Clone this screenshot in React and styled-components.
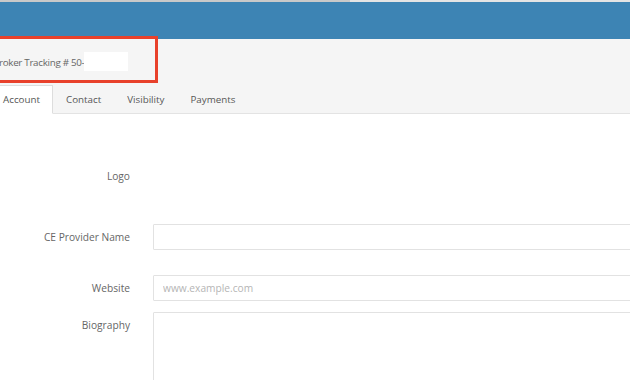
import React from "react";
import styled, { createGlobalStyle } from "styled-components";

const GlobalStyle = createGlobalStyle`
  body {
    margin: 0;
    background: #ffffff;
    font-family: "Open Sans", "Liberation Sans", sans-serif;
    overflow: hidden;
  }
`;

const tabs = ["Account", "Contact", "Visibility", "Payments"];

const App = () => {
  return (
    <>
      <GlobalStyle />
      <Page>
        <TopStrip>
          <StripPart />
          <StripPart light />
        </TopStrip>
        <Header />
        <SubBar>
          <TrackingBox>
            <TrackingText>Broker Tracking # 50-</TrackingText>
            <Redacted />
          </TrackingBox>
          <TabList>
            {tabs.map((t, i) => (
              <Tab key={t} active={i === 0}>
                {t}
              </Tab>
            ))}
          </TabList>
        </SubBar>
        <Form>
          <Row gap={35}>
            <Label>Logo</Label>
            <Spacer />
          </Row>
          <Row gap={25}>
            <Label>CE Provider Name</Label>
            <Input type="text" />
          </Row>
          <Row gap={11}>
            <Label>Website</Label>
            <Input type="text" placeholder="www.example.com" />
          </Row>
          <Row top>
            <Label top>Biography</Label>
            <TextArea />
          </Row>
        </Form>
      </Page>
    </>
  );
};

const Page = styled.div`
  width: 630px;
  height: 380px;
  overflow: hidden;
`;

const TopStrip = styled.div`
  display: flex;
  height: 2px;
`;

const StripPart = styled.div`
  flex: ${(p) => (p.light ? "1" : "0 0 350px")};
  background: ${(p) => (p.light ? "#e4e4e4" : "#c9c9c9")};
`;

const Header = styled.div`
  height: 37px;
  background: #3d84b4;
`;

const SubBar = styled.div`
  background: #f5f5f5;
  border-bottom: 1px solid #e3e3e3;
  height: 74px;
  display: flex;
  flex-direction: column;
`;

const TrackingBox = styled.div`
  display: flex;
  align-items: center;
  width: 160px;
  height: 41px;
  margin-left: -8px;
  margin-top: -3px;
  border: 3px solid #e8412b;
  box-sizing: content-box;
`;

const TrackingText = styled.span`
  font-size: 9.8px;
  letter-spacing: -0.3px;
  color: #666666;
  margin-left: -2px;
  padding-top: 5px;
`;

const Redacted = styled.span`
  display: inline-block;
  width: 44px;
  height: 19px;
  margin-top: 3px;
  background: #ffffff;
`;

const TabList = styled.div`
  display: flex;
  margin-top: 2px;
  margin-left: -10px;
  flex: 1;
  align-items: flex-end;
`;

const Tab = styled.div`
  height: 27px;
  display: flex;
  align-items: center;
  padding: 0 12px;
  font-size: 9.8px;
  color: #555555;
  margin-bottom: -1px;
  background: ${(p) => (p.active ? "#ffffff" : "transparent")};
  border: 1px solid ${(p) => (p.active ? "#dddddd" : "transparent")};
  border-bottom: 1px solid ${(p) => (p.active ? "#ffffff" : "transparent")};
`;

const Form = styled.div`
  padding-top: 49px;
  width: 760px;
`;

const Row = styled.div`
  display: flex;
  align-items: ${(p) => (p.top ? "flex-start" : "center")};
  gap: 23px;
  margin-bottom: ${(p) => (p.gap ? `${p.gap}px` : "0")};
`;

const Label = styled.label`
  flex: 0 0 130px;
  text-align: right;
  font-size: 10.2px;
  color: #666666;
  padding-top: ${(p) => (p.top ? "6px" : "0")};
`;

const Spacer = styled.div`
  height: 26px;
`;

const Input = styled.input`
  flex: 1;
  height: 26px;
  box-sizing: border-box;
  border: 1px solid #e2e2e2;
  border-radius: 1px;
  padding: 0 9px;
  font-family: "Open Sans", "Liberation Sans", sans-serif;
  font-size: 10.2px;
  color: #555555;
  outline: none;
  &::placeholder {
    color: #b5b5b5;
  }
`;

const TextArea = styled.textarea`
  flex: 1;
  height: 100px;
  box-sizing: border-box;
  border: 1px solid #e2e2e2;
  border-radius: 1px;
  resize: none;
  outline: none;
`;

export default App;
